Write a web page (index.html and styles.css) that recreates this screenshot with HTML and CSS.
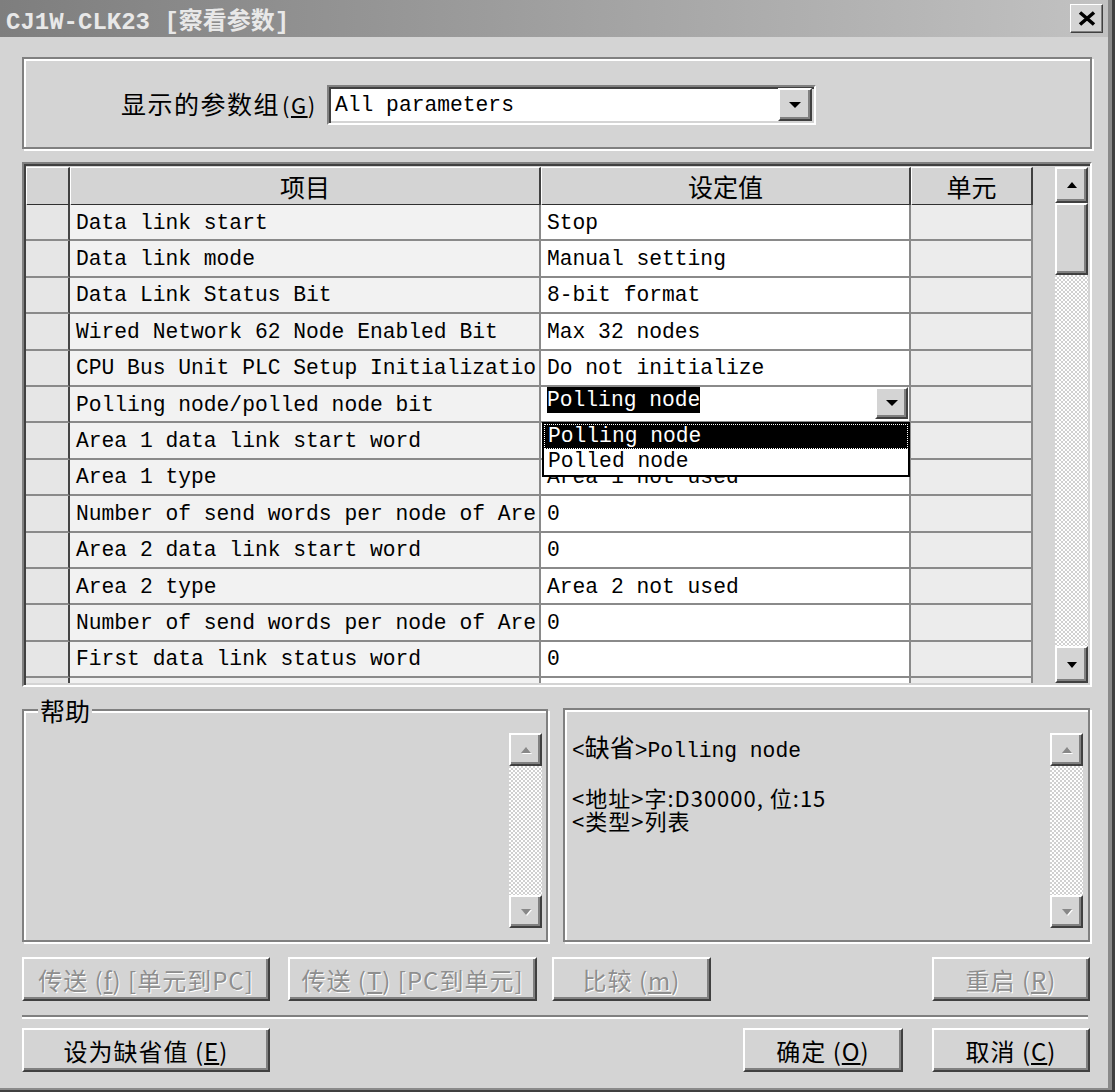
FILE: index.html
```html
<!DOCTYPE html>
<html lang="zh-CN">
<head>
<meta charset="utf-8">
<title>CJ1W-CLK23 [察看参数]</title>
<link rel="stylesheet" href="styles.css">
</head>
<body>
<div class="window">
  <div class="frame">
    <div class="titlebar">
      <span class="title">CJ1W-CLK23 [察看参数]</span>
      <div class="close"><svg width="18" height="15" viewBox="0 0 18 15"><path d="M2 1.5L16 13.5M16 1.5L2 13.5" stroke="#000" stroke-width="3.6" fill="none"/></svg></div>
    </div>
    <div class="client">
      <div class="etched group-top">
        <span class="lbl">显示的参数组<span class="mn">(<u>G</u>)</span></span>
        <div class="combo">
          <span class="mono">All parameters</span>
          <div class="raised dropbtn"><svg width="12" height="6" viewBox="0 0 12 6"><path d="M0 0H12L6 6Z"/></svg></div>
        </div>
      </div>

      <div class="grid-frame">
        <div class="grid">
          <div class="hrow">
            <div class="hc"></div>
            <div class="hc">项目</div>
            <div class="hc">设定值</div>
            <div class="hc">单元</div>
          </div>
          <div class="gbody">
            <div class="row"><div class="rh"></div><div class="it">Data link start</div><div class="va">Stop</div><div class="un"></div></div>
            <div class="row"><div class="rh"></div><div class="it">Data link mode</div><div class="va">Manual setting</div><div class="un"></div></div>
            <div class="row"><div class="rh"></div><div class="it">Data Link Status Bit</div><div class="va">8-bit format</div><div class="un"></div></div>
            <div class="row"><div class="rh"></div><div class="it">Wired Network 62 Node Enabled Bit</div><div class="va">Max 32 nodes</div><div class="un"></div></div>
            <div class="row"><div class="rh"></div><div class="it">CPU Bus Unit PLC Setup Initializatio</div><div class="va">Do not initialize</div><div class="un"></div></div>
            <div class="row"><div class="rh"></div><div class="it">Polling node/polled node bit</div>
              <div class="va edit">
                <span class="sel">Polling node</span>
                <div class="raised ebtn"><svg width="12" height="6" viewBox="0 0 12 6"><path d="M0 0H12L6 6Z"/></svg></div>
                <div class="popup">
                  <div class="opt on">Polling node</div>
                  <div class="opt">Polled node</div>
                </div>
              </div>
              <div class="un"></div></div>
            <div class="row"><div class="rh"></div><div class="it">Area 1 data link start word</div><div class="va"></div><div class="un"></div></div>
            <div class="row"><div class="rh"></div><div class="it">Area 1 type</div><div class="va">Area 1 not used</div><div class="un"></div></div>
            <div class="row"><div class="rh"></div><div class="it">Number of send words per node of Are</div><div class="va">0</div><div class="un"></div></div>
            <div class="row"><div class="rh"></div><div class="it">Area 2 data link start word</div><div class="va">0</div><div class="un"></div></div>
            <div class="row"><div class="rh"></div><div class="it">Area 2 type</div><div class="va">Area 2 not used</div><div class="un"></div></div>
            <div class="row"><div class="rh"></div><div class="it">Number of send words per node of Are</div><div class="va">0</div><div class="un"></div></div>
            <div class="row"><div class="rh"></div><div class="it">First data link status word</div><div class="va">0</div><div class="un"></div></div>
            <div class="row"><div class="rh"></div><div class="it"></div><div class="va"></div><div class="un"></div></div>
          </div>
        </div>
        <div class="vscroll main">
          <div class="raised sbtn up"><svg width="10" height="6" viewBox="0 0 10 6"><path d="M5 0L10 6H0Z"/></svg></div>
          <div class="raised thumb"></div>
          <div class="track"></div>
          <div class="raised sbtn down"><svg width="10" height="6" viewBox="0 0 10 6"><path d="M0 0H10L5 6Z"/></svg></div>
        </div>
      </div>

      <div class="help-row">
        <fieldset class="help">
          <legend>帮助</legend>
          <div class="help-inner">
            <div class="vscroll small off">
              <div class="raised sbtn"><svg width="10" height="6" viewBox="0 0 10 6"><path d="M5 0L10 6H0Z"/></svg></div>
              <div class="track"></div>
              <div class="raised sbtn"><svg width="10" height="6" viewBox="0 0 10 6"><path d="M0 0H10L5 6Z"/></svg></div>
            </div>
          </div>
        </fieldset>
        <div class="etched info">
          <div class="info-text">
            <div class="l1"><span class="mono">&lt;</span><span class="cj">缺省</span><span class="mono">&gt;Polling node</span></div>
            <div class="l2 cj">&lt;地址&gt;字:D30000, 位:15</div>
            <div class="l3 cj">&lt;类型&gt;列表</div>
          </div>
          <div class="vscroll small off">
            <div class="raised sbtn"><svg width="10" height="6" viewBox="0 0 10 6"><path d="M5 0L10 6H0Z"/></svg></div>
            <div class="track"></div>
            <div class="raised sbtn"><svg width="10" height="6" viewBox="0 0 10 6"><path d="M0 0H10L5 6Z"/></svg></div>
          </div>
        </div>
      </div>

      <div class="btnrow r1">
        <div class="raised btn dis b1">传送 (<u>f</u>) [单元到PC]</div>
        <div class="raised btn dis b2">传送 (<u>T</u>) [PC到单元]</div>
        <div class="raised btn dis b3">比较 (<u>m</u>)</div>
        <div class="raised btn dis b4">重启 (<u>R</u>)</div>
      </div>
      <div class="sep"></div>
      <div class="btnrow r2">
        <div class="raised btn b1">设为缺省值 (<u>E</u>)</div>
        <div class="raised btn ok">确定 (<u>O</u>)</div>
        <div class="raised btn cancel">取消 (<u>C</u>)</div>
      </div>
    </div>
  </div>
</div>
</body>
</html>
```

FILE: styles.css
```css
* { box-sizing: border-box; }
html, body { margin: 0; padding: 0; }
body {
  width: 1115px;
  height: 1092px;
  overflow: hidden;
  background: #d4d4d4;
  color: #000;
  font-family: "Liberation Mono", "Noto Sans CJK SC", monospace;
}

.window {
  width: 1115px;
  height: 1092px;
  background: #d4d4d4;
  border-right: 3px solid #404040;
  border-bottom: 2px solid #404040;
}
.frame {
  height: 100%;
  display: flex;
  flex-direction: column;
  border-right: 4px solid #8a8a8a;
  border-bottom: 2px solid #8a8a8a;
}

/* title bar */
.titlebar {
  flex: none;
  height: 37px;
  display: flex;
  align-items: center;
  justify-content: space-between;
  padding: 0 5px 0 6px;
  background: linear-gradient(to right, #7e7e7e, #c2c2c2);
}
.title {
  color: #e8e8e8;
  font: bold 24px "Liberation Mono", "Noto Sans CJK SC", monospace;
  white-space: nowrap;
}
.close {
  width: 33px;
  height: 29px;
  display: flex;
  align-items: center;
  justify-content: center;
  background: #d4d4d4;
  border: 1px solid;
  border-color: #fff #404040 #404040 #fff;
  box-shadow: inset -1px -1px 0 #808080;
}

.client {
  flex: 1;
  display: flex;
  flex-direction: column;
  padding: 20px 16px 0 22px;
}

/* common */
.etched {
  border: 2px solid #808080;
  box-shadow: 2px 2px 0 #fff, inset 2px 2px 0 #fff;
}
.raised {
  background: #d4d4d4;
  border: 2px solid;
  border-color: #fff #404040 #404040 #fff;
  box-shadow: inset -2px -2px 0 #808080;
}
.mono {
  font-family: "Liberation Mono", monospace;
  font-size: 21.3px;
}
.cj {
  font-family: "Noto Sans CJK SC", sans-serif;
  font-size: 25px;
}

/* parameter group selector */
.group-top {
  height: 92px;
  display: flex;
  align-items: center;
  padding-left: 97px;
}
.lbl {
  width: 206px;
  font: 25px "Noto Sans CJK SC", sans-serif;
  letter-spacing: 1.5px;
  white-space: nowrap;
}
.mn { font-size: 22px; margin-left: 2px; }
.combo {
  width: 489px;
  height: 40px;
  margin-top: 3px;
  display: flex;
  align-items: center;
  background: #fff;
  border: 2px solid;
  border-color: #808080 #fff #fff #808080;
  box-shadow: inset 2px 2px 0 #404040, inset -2px -2px 0 #d4d4d4;
  padding: 2px 2px 2px 6px;
}
.dropbtn {
  margin-left: auto;
  width: 34px;
  height: 33px;
  display: flex;
  align-items: center;
  justify-content: center;
}

/* grid */
.grid-frame {
  margin-top: 13px;
  height: 525px;
  display: flex;
  border: 2px solid;
  border-color: #808080 #fff #fff #808080;
  box-shadow: inset 2px 2px 0 #404040, inset -2px -2px 0 #d4d4d4;
  padding: 3px 2px 2px 2px;
}
.grid {
  width: 1029px;
  display: flex;
  flex-direction: column;
  background: #d4d4d4;
}
.hrow {
  flex: none;
  display: grid;
  grid-template-columns: 44px 471px 370px 122px;
  height: 38px;
}
.hc {
  background: #d4d4d4;
  border-top: 1px solid #fff;
  border-left: 1px solid #fff;
  border-right: 2px solid #404040;
  border-bottom: 2px solid #303030;
  display: flex;
  align-items: center;
  justify-content: center;
  font: 25px "Noto Sans CJK SC", sans-serif;
}
.gbody {
  flex: 1;
  overflow: hidden;
}
.row {
  display: grid;
  grid-template-columns: 44px 471px 370px 122px;
  height: 36.4px;
  font-size: 21.3px;
  font-family: "Liberation Mono", monospace;
}
.row > div {
  border-right: 2px solid #8a8a8a;
  border-bottom: 2px solid #8a8a8a;
  display: flex;
  align-items: center;
  white-space: nowrap;
  overflow: hidden;
  padding-left: 6px;
  padding-top: 1px;
}
.row > .rh { background: #e6e6e6; border-right-color: #454545; }
.row > .it { background: #f2f2f2; }
.row > .va { background: #fff; }
.row > .un { background: #ececec; }

.row > .va.edit {
  position: relative;
  overflow: visible;
  align-items: flex-start;
  padding-top: 0;
}
.sel {
  background: #000;
  color: #fff;
  height: 26px;
  line-height: 26px;
}
.ebtn {
  margin-left: auto;
  margin-right: 1px;
  width: 33px;
  height: 32px;
  display: flex;
  align-items: center;
  justify-content: center;
}
.popup {
  position: absolute;
  left: 1px;
  top: 35px;
  width: 368px;
  height: 55px;
  border: 2px solid #000;
  background: #fff;
  z-index: 2;
}
.opt {
  height: 25px;
  line-height: 25px;
  padding-left: 4px;
}
.opt.on {
  background: #000;
  color: #fff;
  outline: 1px dotted #fff;
  outline-offset: -1px;
}

/* scroll bars */
.vscroll {
  width: 33px;
  display: flex;
  flex-direction: column;
}
.vscroll .sbtn {
  flex: none;
  height: 36px;
  display: flex;
  align-items: center;
  justify-content: center;
}
.vscroll.main .down { height: 37px; }
.vscroll .thumb { flex: none; height: 72px; }
.track {
  flex: 1;
  background: repeating-conic-gradient(#fff 0 25%, #d0d0d0 0 50%) 0 0 / 4px 4px;
}
.vscroll.small { height: 195px; }
.vscroll.small .sbtn { height: 33px; }
.vscroll.off svg { fill: #888; filter: drop-shadow(1px 1px 0 #fff); }

/* help area */
.help-row {
  display: flex;
  align-items: flex-start;
  margin-top: 10px;
}
fieldset.help {
  width: 526px;
  min-width: 0;
  margin: 0;
  padding: 10px 4px 12px 0;
  border: 2px solid #808080;
  box-shadow: 2px 2px 0 #fff, inset 2px 2px 0 #fff;
}
fieldset.help legend {
  margin-left: 14px;
  padding: 0 2px;
  font: 25px/26px "Noto Sans CJK SC", sans-serif;
  background: #d4d4d4;
}
.help-inner {
  display: flex;
  justify-content: flex-end;
}
.info {
  flex: 1;
  margin: 11px 2px 0 15px;
  height: 234px;
  display: flex;
  padding: 23px 5px 12px 7px;
}
.info-text { flex: 1; }
.l1 { height: 26px; line-height: 26px; white-space: nowrap; }
.l2, .l3 { line-height: 23px; font-size: 22px; letter-spacing: 1px; white-space: nowrap; }
.l2 { margin-top: 27px; }

/* buttons */
.btnrow {
  display: flex;
  height: 44px;
  flex: none;
}
.btnrow.r1 { margin-top: 15px; }
.btnrow.r2 { margin-top: 9px; }
.btn {
  height: 44px;
  display: flex;
  align-items: center;
  justify-content: center;
  font: 24px "Noto Sans CJK SC", sans-serif;
  letter-spacing: 1px;
  white-space: pre;
}
.btn.dis { color: #8e8e8e; text-shadow: 1px 1px 0 #fff; }
.btn.b1 { width: 248px; }
.btn.b2 { width: 249px; margin-left: 18px; }
.btn.b3 { width: 159px; margin-left: 15px; }
.btn.b4 { width: 158px; margin-left: auto; margin-right: 2px; }
.btn.ok { width: 160px; margin-left: auto; }
.btn.cancel { width: 158px; margin-left: 29px; margin-right: 2px; }
.sep {
  margin-top: 14px;
  margin-right: 4px;
  height: 4px;
  border-top: 2px solid #808080;
  border-bottom: 2px solid #fff;
}
```
